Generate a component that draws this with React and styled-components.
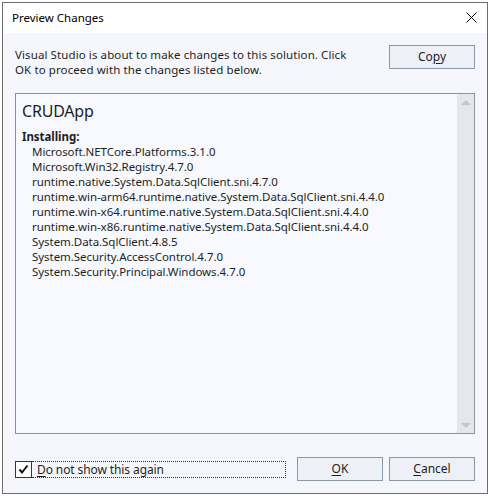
import React from "react";
import styled, { createGlobalStyle } from "styled-components";

const GlobalStyle = createGlobalStyle`
  html, body { margin: 0; padding: 0; background: #ffffff; }
  body { font-family: "Segoe UI", "Noto Sans", "Open Sans", sans-serif; font-size: 11.5px; color: #1e1e1e; }
  * { box-sizing: border-box; }
`;

const Page = styled.div`
  width: 490px;
  height: 496px;
  padding: 2px 2px 2px 2px;
`;

const Window = styled.div`
  width: 486px;
  height: 492px;
  border: 1px solid #6d6d6d;
  background: #f5f7fc;
  display: flex;
  flex-direction: column;
`;

const TitleBar = styled.div`
  height: 30px;
  background: #ffffff;
  display: flex;
  align-items: center;
  justify-content: space-between;
  padding: 0 9px 0 9px;
  flex-shrink: 0;
`;

const Title = styled.span`
  font-size: 11.5px;
  color: #000;
  margin-top: -2px;
`;

const CloseButton = styled.button`
  width: 14px;
  height: 14px;
  padding: 0;
  border: none;
  background: transparent;
  display: flex;
  align-items: center;
  justify-content: center;
  margin-top: -1px;
`;

const Body = styled.div`
  flex: 1;
  display: flex;
  flex-direction: column;
  padding: 12px 12px 12px 12px;
`;

const TopRow = styled.div`
  display: flex;
  justify-content: space-between;
  align-items: flex-start;
`;

const Message = styled.p`
  margin: 0;
  width: 345px;
  line-height: 15px;
  padding-top: 2px;
  color: #1e1e1e;
  letter-spacing: 0.1px;
`;

const Button = styled.button`
  width: 86px;
  height: 24px;
  border: 1px solid #8c97ab;
  background: #eef0f7;
  font-family: inherit;
  font-size: 12px;
  color: #1e1e1e;
  padding: 0;
  line-height: 20px;
  & u { text-decoration: underline; text-underline-offset: 2px; }
`;

const ListBox = styled.div`
  margin-top: 16px;
  height: 341px;
  border: 1px solid #8a93a4;
  background: #f7f9fe;
  display: flex;
`;

const ListContent = styled.div`
  flex: 1;
  padding: 6px 6px;
  letter-spacing: -0.05px;
`;

const Project = styled.div`
  font-size: 16px;
  line-height: 22px;
  color: #1e1e1e;
  letter-spacing: -0.2px;
`;

const SectionLabel = styled.div`
  font-weight: bold;
  margin-top: 7px;
  line-height: 15px;
`;

const Item = styled.div`
  padding-left: 10px;
  line-height: 15px;
`;

const Scrollbar = styled.div`
  width: 17px;
  background: #e6e7ec;
  display: flex;
  flex-direction: column;
  justify-content: space-between;
  align-items: center;
  padding: 6px 0 5px;
`;

const Arrow = styled.div`
  width: 0;
  height: 0;
  border-left: 5px solid transparent;
  border-right: 5px solid transparent;
  ${(p) => (p.$down ? "border-top: 5px solid #c4c5cb;" : "border-bottom: 5px solid #c4c5cb;")}
`;

const Footer = styled.div`
  margin-top: auto;
  display: flex;
  align-items: center;
  justify-content: space-between;
`;

const CheckWrap = styled.label`
  display: flex;
  align-items: center;
  height: 17px;
`;

const Box = styled.span`
  width: 17px;
  height: 17px;
  border: 1px solid #333;
  background: #fff;
  display: flex;
  align-items: center;
  justify-content: center;
`;

const FocusLabel = styled.span`
  width: 254px;
  height: 17px;
  border: 1px dotted #333;
  border-left: none;
  padding-left: 5px;
  line-height: 15px;
  font-size: 12px;
  letter-spacing: -0.1px;
  & u { text-decoration: underline; text-underline-offset: 2px; }
`;

const Buttons = styled.div`
  display: flex;
  gap: 6px;
`;

const items = [
  "Microsoft.NETCore.Platforms.3.1.0",
  "Microsoft.Win32.Registry.4.7.0",
  "runtime.native.System.Data.SqlClient.sni.4.7.0",
  "runtime.win-arm64.runtime.native.System.Data.SqlClient.sni.4.4.0",
  "runtime.win-x64.runtime.native.System.Data.SqlClient.sni.4.4.0",
  "runtime.win-x86.runtime.native.System.Data.SqlClient.sni.4.4.0",
  "System.Data.SqlClient.4.8.5",
  "System.Security.AccessControl.4.7.0",
  "System.Security.Principal.Windows.4.7.0",
];

export default function App() {
  return (
    <Page>
      <GlobalStyle />
      <Window>
        <TitleBar>
          <Title>Preview Changes</Title>
          <CloseButton aria-label="Close">
            <svg width="11" height="11" viewBox="0 0 11 11">
              <path d="M0.5 0.5 L10.5 10.5 M10.5 0.5 L0.5 10.5" stroke="#000" strokeWidth="1" />
            </svg>
          </CloseButton>
        </TitleBar>
        <Body>
          <TopRow>
            <Message>
              Visual Studio is about to make changes to this solution. Click OK to proceed with the changes listed below.
            </Message>
            <Button>
              Co<u>p</u>y
            </Button>
          </TopRow>
          <ListBox>
            <ListContent>
              <Project>CRUDApp</Project>
              <SectionLabel>Installing:</SectionLabel>
              {items.map((t) => (
                <Item key={t}>{t}</Item>
              ))}
            </ListContent>
            <Scrollbar>
              <Arrow />
              <Arrow $down />
            </Scrollbar>
          </ListBox>
          <Footer>
            <CheckWrap>
              <Box>
                <svg width="11" height="11" viewBox="0 0 11 11">
                  <path d="M1.5 5.5 L4 8.5 L9.5 1.5" stroke="#111" strokeWidth="2" fill="none" />
                </svg>
              </Box>
              <FocusLabel>
                <u>D</u>o not show this again
              </FocusLabel>
            </CheckWrap>
            <Buttons>
              <Button>
                <u>O</u>K
              </Button>
              <Button>
                <u>C</u>ancel
              </Button>
            </Buttons>
          </Footer>
        </Body>
      </Window>
    </Page>
  );
}
